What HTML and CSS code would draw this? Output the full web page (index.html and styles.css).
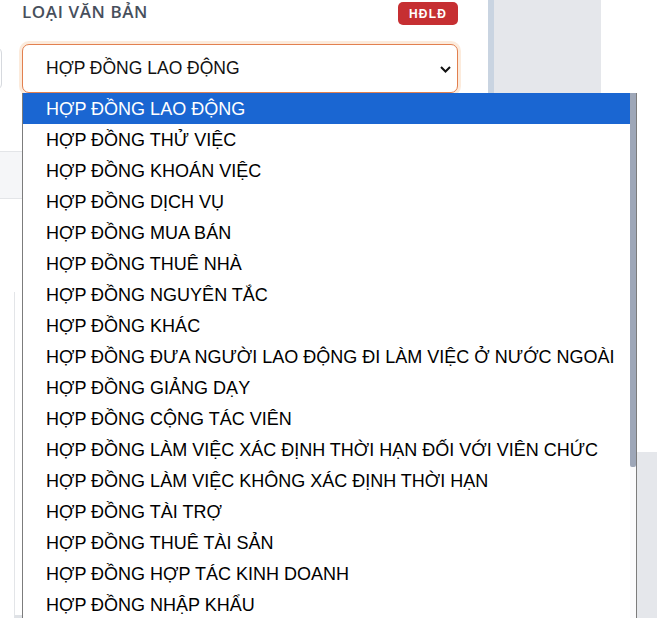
FILE: index.html
```html
<!DOCTYPE html>
<html lang="vi">
<head>
<meta charset="utf-8">
<title>Loại văn bản</title>
<link rel="stylesheet" href="styles.css">
</head>
<body>
<div class="app">
  <main class="form-col">
    <div class="field-head">
      <span class="label">LOẠI VĂN BẢN</span>
      <span class="badge">HĐLĐ</span>
    </div>
    <div class="field-row">
      <div class="ghost-input"></div>
      <div class="select-wrap">
        <div class="select">
          <span class="select-value">HỢP ĐỒNG LAO ĐỘNG</span>
          <svg class="chevron" width="11" height="7" viewBox="0 0 11 7"><path d="M1 1 L5.5 5.5 L10 1" fill="none" stroke="#111" stroke-width="2"/></svg>
        </div>
        <div class="dropdown">
          <ul class="options">
            <li class="option selected">HỢP ĐỒNG LAO ĐỘNG</li>
            <li class="option">HỢP ĐỒNG THỬ VIỆC</li>
            <li class="option">HỢP ĐỒNG KHOÁN VIỆC</li>
            <li class="option">HỢP ĐỒNG DỊCH VỤ</li>
            <li class="option">HỢP ĐỒNG MUA BÁN</li>
            <li class="option">HỢP ĐỒNG THUÊ NHÀ</li>
            <li class="option">HỢP ĐỒNG NGUYÊN TẮC</li>
            <li class="option">HỢP ĐỒNG KHÁC</li>
            <li class="option">HỢP ĐỒNG ĐƯA NGƯỜI LAO ĐỘNG ĐI LÀM VIỆC Ở NƯỚC NGOÀI</li>
            <li class="option">HỢP ĐỒNG GIẢNG DẠY</li>
            <li class="option">HỢP ĐỒNG CỘNG TÁC VIÊN</li>
            <li class="option">HỢP ĐỒNG LÀM VIỆC XÁC ĐỊNH THỜI HẠN ĐỐI VỚI VIÊN CHỨC</li>
            <li class="option">HỢP ĐỒNG LÀM VIỆC KHÔNG XÁC ĐỊNH THỜI HẠN</li>
            <li class="option">HỢP ĐỒNG TÀI TRỢ</li>
            <li class="option">HỢP ĐỒNG THUÊ TÀI SẢN</li>
            <li class="option">HỢP ĐỒNG HỢP TÁC KINH DOANH</li>
            <li class="option">HỢP ĐỒNG NHẬP KHẨU</li>
          </ul>
          <div class="scrollbar"><div class="thumb"></div></div>
        </div>
      </div>
    </div>
    <div class="under">
      <div class="table-head"></div>
      <div class="card"></div>
    </div>
  </main>
  <div class="divider"></div>
  <aside class="side-panel"></aside>
  <div class="right-col"><div class="right-bottom"></div></div>
</div>
</body>
</html>
```

FILE: styles.css
```css
* { box-sizing: border-box; }
html, body {
  margin: 0;
  padding: 0;
  background: #ffffff;
  width: 657px;
  height: 618px;
  overflow: hidden;
  font-family: "Liberation Sans", Arial, sans-serif;
}
.app {
  display: grid;
  grid-template-columns: 488px 6px 107px 1fr;
  height: 618px;
}
.form-col {
  padding: 0 30px 0 22px;
  position: relative;
  z-index: 2;
}
.field-head {
  display: flex;
  justify-content: space-between;
  align-items: center;
  height: 25px;
  padding-top: 2px;
}
.label {
  font-family: "Open Sans", "Liberation Sans", sans-serif;
  font-weight: 600;
  font-size: 17px;
  letter-spacing: 0.6px;
  color: #474f5c;
  line-height: 20px;
  margin-top: -3px;
}
.badge {
  background: #c62f32;
  color: #ffffff;
  font-family: "Liberation Sans", Arial, sans-serif;
  font-weight: 700;
  font-size: 12px;
  letter-spacing: 1.2px;
  height: 23px;
  width: 60px;
  border-radius: 5px;
  display: flex;
  align-items: center;
  justify-content: center;
}
.field-row {
  display: flex;
  gap: 20px;
  margin-top: 19px;
}
.ghost-input {
  flex: 0 0 22px;
  margin-left: -42px;
  margin-top: 3px;
  height: 43px;
  border: 1px solid #d6d9de;
  border-radius: 6px;
}
.select-wrap {
  position: relative;
  width: 436px;
}
.select {
  height: 49px;
  border: 1px solid #e2804f;
  border-radius: 7px;
  box-shadow: 0 0 0 3px #fcebdc;
  display: flex;
  align-items: center;
  justify-content: space-between;
  padding: 0 6px 0 23px;
  background: #fff;
}
.select-value {
  font-size: 17.5px;
  color: #111;
}
.chevron { display: block; margin-top: 1px; }
.dropdown {
  position: absolute;
  top: 49px;
  left: 0;
  width: 615px;
  height: 540px;
  background: #fff;
  border-left: 1px solid #7c7c7c;
  border-right: 1px solid #7c7c7c;
  display: flex;
  overflow: hidden;
  z-index: 5;
}
.options {
  list-style: none;
  margin: 0;
  padding: 0;
  flex: 1;
}
.option {
  height: 31px;
  line-height: 31px;
  padding-top: 1px;
  padding-left: 23px;
  font-size: 18px;
  color: #000;
  white-space: nowrap;
}
.option.selected {
  background: #1a66d2;
  color: #fff;
}
.scrollbar {
  flex: 0 0 6px;
  background: #fbfbfc;
}
.thumb {
  height: 374px;
  background: #9ea7b8;
  border-radius: 0 0 2px 2px;
}
.under {
  margin-top: 58px;
  margin-left: -22px;
}
.table-head {
  height: 48px;
  background: #f5f6f8;
  border-top: 1px solid #e3e5e8;
  border-bottom: 1px solid #e3e5e8;
}
.card {
  margin-top: 93px;
  margin-left: 14px;
  height: 326px;
  border-left: 1px solid #e3e5e8;
  border-bottom: 3px solid #dfe2e6;
}
.divider { background: #c9d4e1; }
.side-panel { background: #e5e7eb; }
.right-col {
  display: flex;
  flex-direction: column;
  justify-content: flex-end;
}
.right-bottom {
  height: 166px;
  background: #e5e7eb;
}
```
